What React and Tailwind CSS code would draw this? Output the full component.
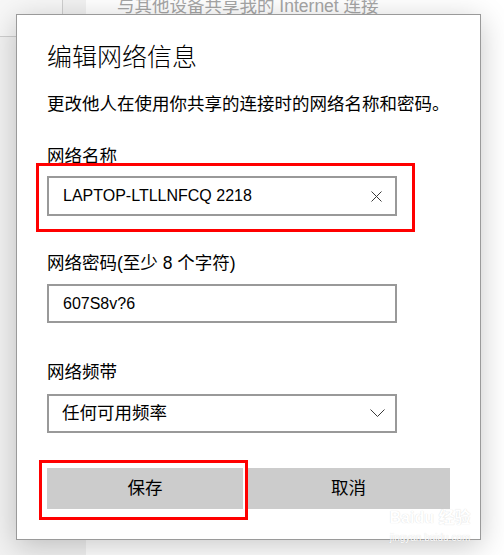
import React from 'react';

const font = { fontFamily: '"Liberation Sans", "Noto Sans CJK SC", sans-serif' };

const Field = ({ label, children, labelTop, inputTop }) => (
    <div className={labelTop}>
        <div className="text-[17.5px] leading-[24px] text-black">{label}</div>
        <div className={inputTop}>{children}</div>
    </div>
);

const App = () => {
    return (
        <div className="relative w-[504px] h-[555px] overflow-hidden bg-white flex" style={font}>
            {/* page behind the dialog */}
            <div className="w-[86px] h-full bg-[#f2f2f2] flex flex-col">
                <div className="w-[63px] h-[37px] bg-[#f7f7f7] border-r border-b border-[#cfcfcf]" />
            </div>
            <div className="flex-1 pl-[31px]">
                <div className="mt-[-6px] text-[17.5px] leading-[24px] text-[#a6a6a6] whitespace-nowrap">
                    与其他设备共享我的 Internet 连接
                </div>
            </div>

            {/* dialog */}
            <div className="absolute left-[16px] top-[14px] w-[465px] bg-white border border-[#9a9a9a] shadow-[0_6px_28px_rgba(0,0,0,0.22)] pl-[30px] pr-[30px] pt-[26px] pb-[30px]">
                <h1 className="text-[25px] leading-[32px] font-light text-black">编辑网络信息</h1>
                <p className="mt-[19px] text-[17.5px] leading-[24px] text-black whitespace-nowrap">
                    更改他人在使用你共享的连接时的网络名称和密码。
                </p>

                <Field label="网络名称" labelTop="mt-[28px]" inputTop="mt-[8px]">
                    <div className="relative w-[350px] h-[40px] border-2 border-[#999999] flex items-center pl-[14px] pr-[12px]">
                        <span className="flex-1 text-[16px] text-black">LAPTOP-LTLLNFCQ 2218</span>
                        <svg width="11" height="11" viewBox="0 0 11 11" className="mr-[1px]">
                            <path d="M0.5 0.5 L10.5 10.5 M10.5 0.5 L0.5 10.5" stroke="#3a3a3a" strokeWidth="1" fill="none" />
                        </svg>
                        <div className="absolute left-[-13px] top-[-15px] w-[379px] h-[69px] border-[3px] border-[#ff0000] pointer-events-none" />
                    </div>
                </Field>

                <Field label="网络密码(至少 8 个字符)" labelTop="mt-[35px]" inputTop="mt-[9px]">
                    <div className="w-[350px] h-[39px] border-2 border-[#999999] flex items-center pl-[14px]">
                        <span className="text-[16px] text-black">607S8v?6</span>
                    </div>
                </Field>

                <Field label="网络频带" labelTop="mt-[37px]" inputTop="mt-[10px]">
                    <div className="w-[350px] h-[39px] border-2 border-[#999999] flex items-center pl-[13px] pr-[10px]">
                        <span className="flex-1 text-[17.5px] text-black">任何可用频率</span>
                        <svg width="15" height="9" viewBox="0 0 15 9">
                            <path d="M0.5 0.5 L7.5 7.5 L14.5 0.5" stroke="#3a3a3a" strokeWidth="1" fill="none" />
                        </svg>
                    </div>
                </Field>

                <div className="mt-[35px] flex gap-[4px]">
                    <div className="relative w-[196px] h-[41px] bg-[#cccccc] flex items-center justify-center text-[17.5px] text-black">
                        保存
                        <div className="absolute left-[-8px] top-[-8px] w-[209px] h-[60px] border-[3px] border-[#ff0000] pointer-events-none" />
                    </div>
                    <div className="flex-1 h-[41px] bg-[#cccccc] flex items-center justify-center text-[17.5px] text-black">
                        取消
                    </div>
                </div>
            </div>

            {/* watermark */}
            <div className="absolute left-[384px] top-[508px] w-[92px] flex flex-col items-center pointer-events-none select-none">
                <div className="text-[16px] leading-[20px] font-bold text-white [text-shadow:0_0_1px_rgba(0,0,0,0.18)] whitespace-nowrap">
                    Baidu 经验
                </div>
                <div className="mt-[4px] text-[10px] leading-[12px] text-white [text-shadow:0_0_1px_rgba(0,0,0,0.18)] whitespace-nowrap">
                    jingyan.baidu.com
                </div>
            </div>
        </div>
    );
};

export default App;
